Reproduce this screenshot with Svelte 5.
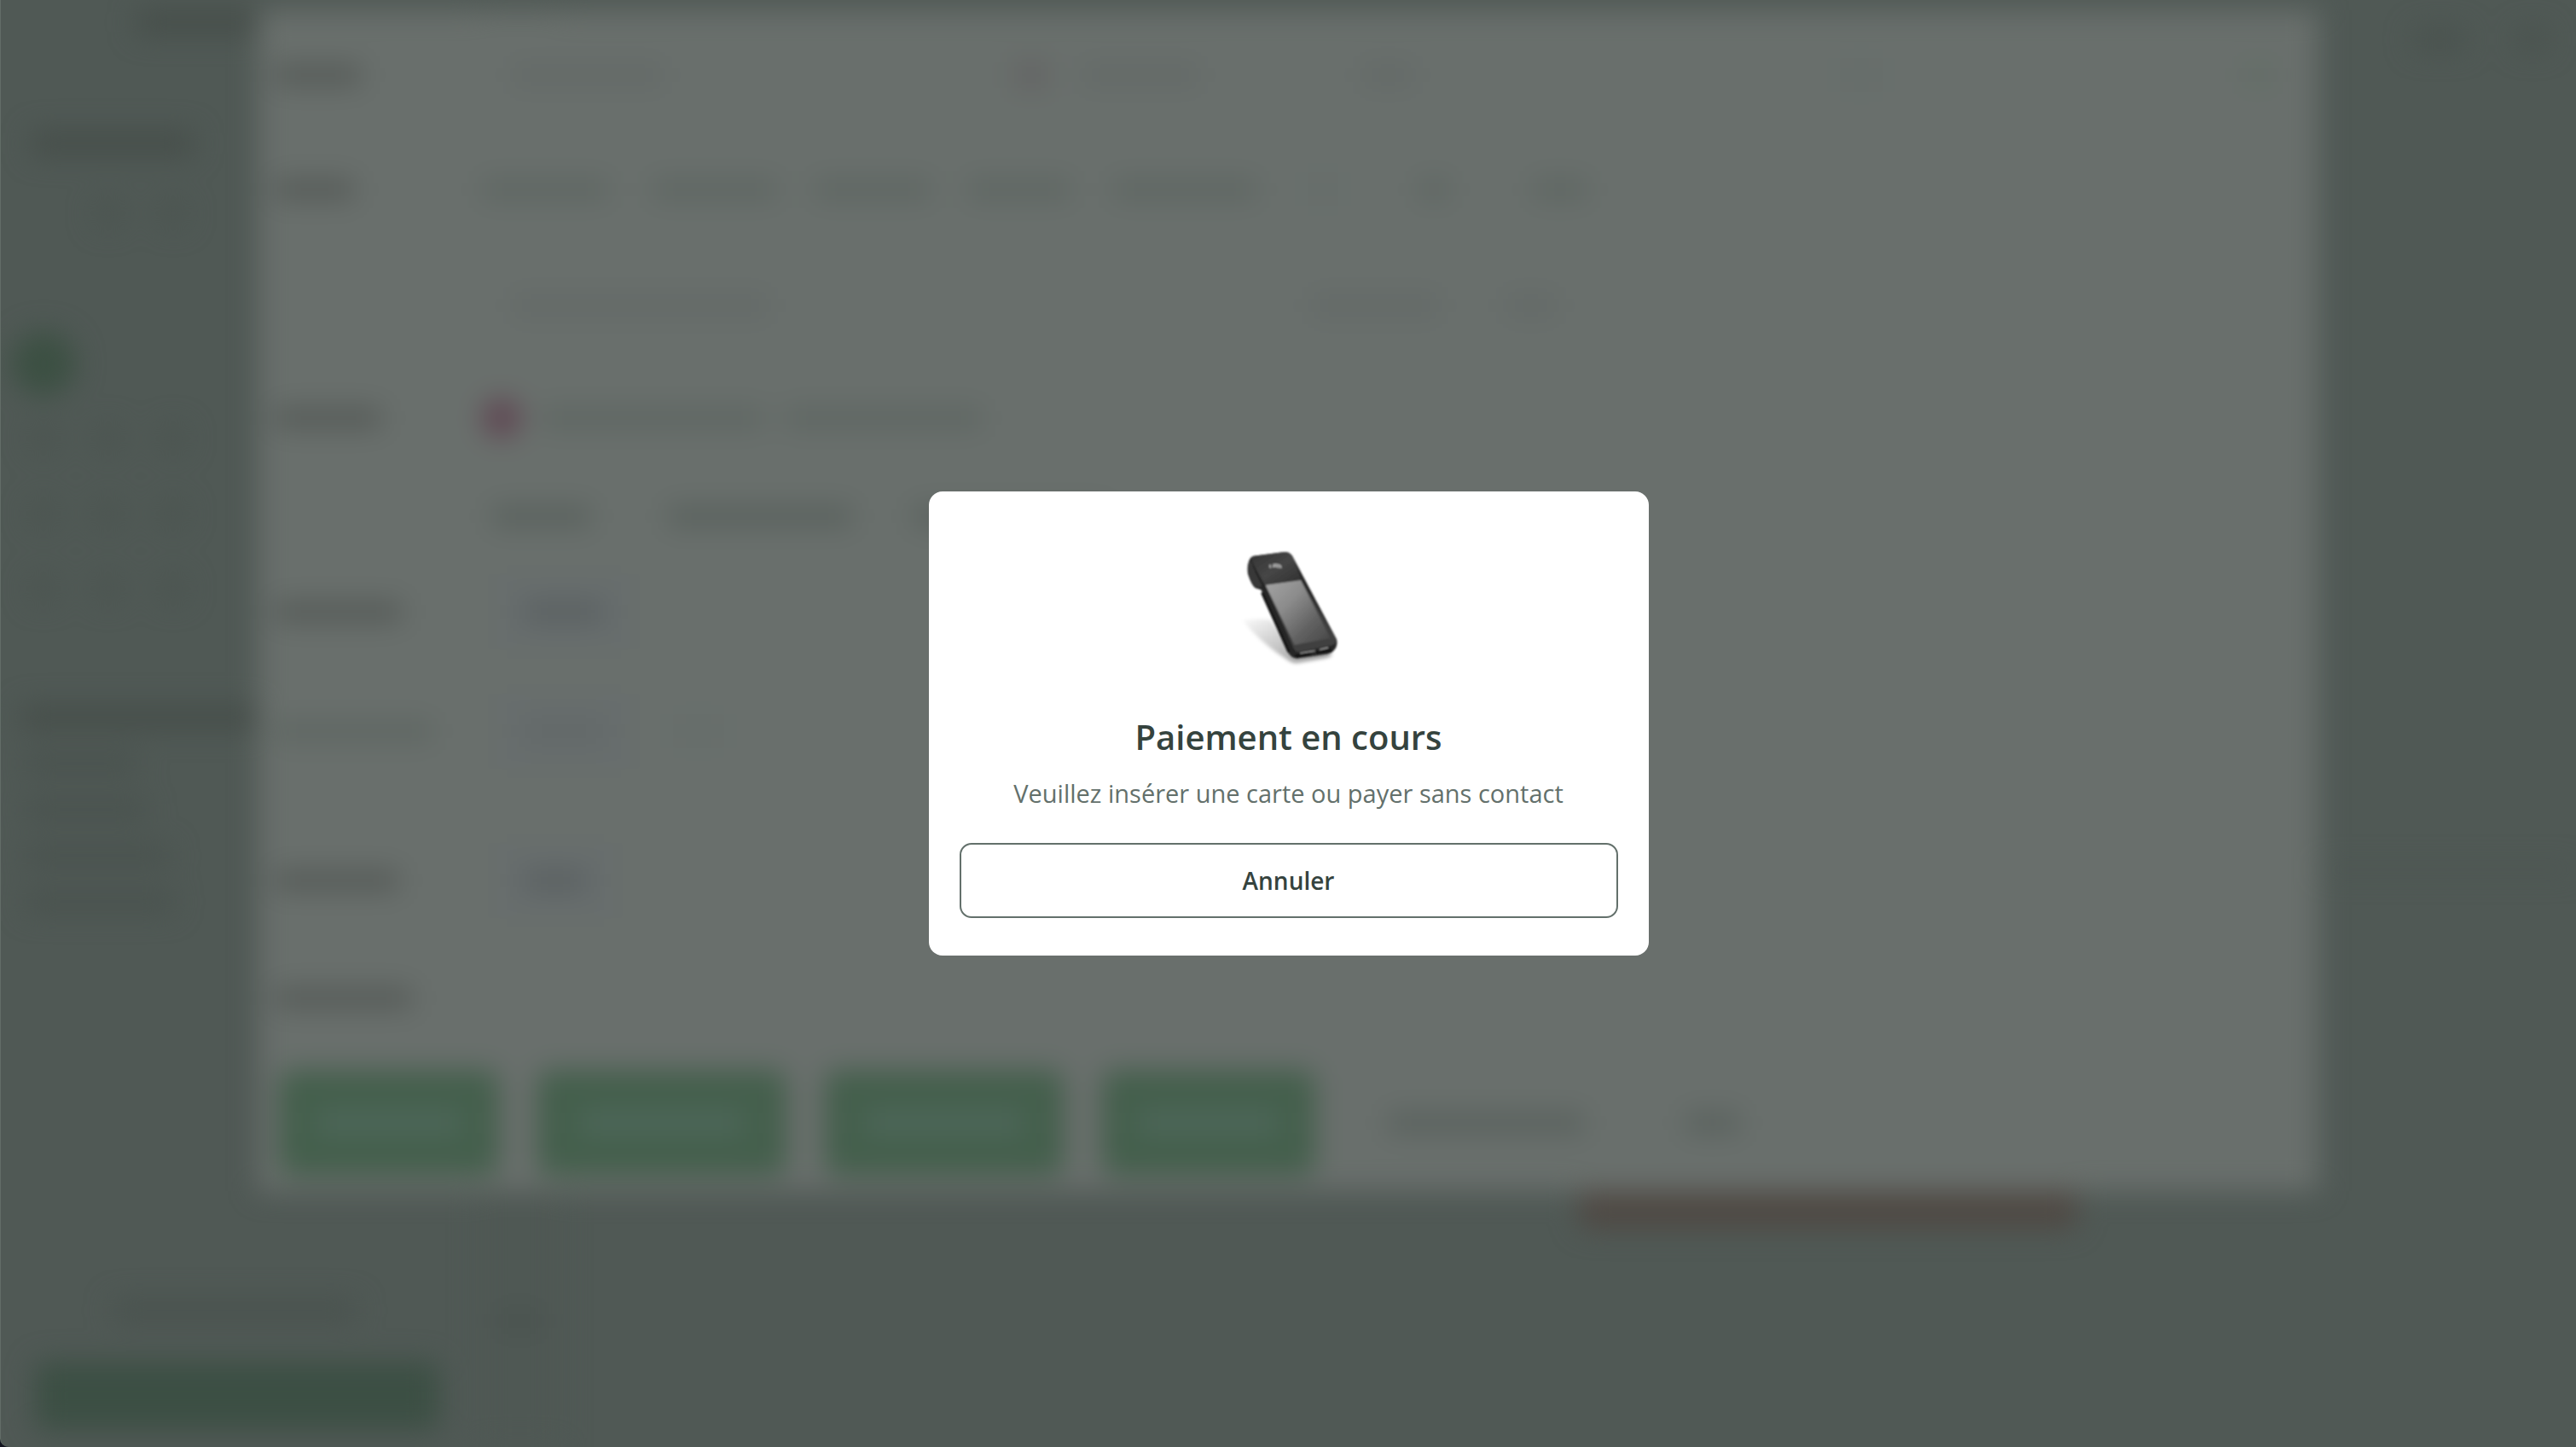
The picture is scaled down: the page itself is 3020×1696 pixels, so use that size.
<script lang="ts">
	type Bar = { gap: number; width: number; tone?: string };
	type Row = { height: number; label?: number; soft?: boolean; bars: Bar[] };

	let open = true;

	// gap and width of every block on a line, in pixels
	const rows: Row[] = [
		{
			height: 152,
			label: 100,
			bars: [
				{ gap: 36, width: 176, tone: "faint" },
				{ gap: 412, width: 40, tone: "flag" },
				{ gap: 40, width: 136, tone: "faint" },
				{ gap: 192, width: 60, tone: "faint" },
				{ gap: 500, width: 50, tone: "ghost" },
				{ gap: 424, width: 32, tone: "moss" },
			],
		},
		{
			height: 116,
			label: 92,
			bars: [
				{ gap: 0, width: 148, tone: "text" },
				{ gap: 52, width: 146, tone: "text" },
				{ gap: 44, width: 136, tone: "text" },
				{ gap: 44, width: 120, tone: "text" },
				{ gap: 50, width: 168, tone: "text" },
				{ gap: 60, width: 36, tone: "ghost" },
				{ gap: 94, width: 36, tone: "text" },
				{ gap: 98, width: 64, tone: "text" },
			],
		},
		{
			height: 156,
			bars: [
				{ gap: 36, width: 300, tone: "faint" },
				{ gap: 636, width: 150, tone: "faint" },
				{ gap: 78, width: 60, tone: "faint" },
			],
		},
		{
			height: 108,
			label: 124,
			bars: [
				{ gap: 0, width: 46, tone: "pink" },
				{ gap: 24, width: 260, tone: "text" },
				{ gap: 26, width: 230, tone: "text" },
			],
		},
		{
			height: 122,
			bars: [
				{ gap: 12, width: 116, tone: "strong" },
				{ gap: 90, width: 216, tone: "strong" },
				{ gap: 72, width: 230, tone: "strong" },
			],
		},
		{ height: 102, label: 148, bars: [{ gap: 18, width: 156, tone: "chip" }] },
		{
			height: 178,
			label: 184,
			soft: true,
			bars: [
				{ gap: 18, width: 156, tone: "chip light" },
				{ gap: 50, width: 60, tone: "ghost" },
			],
		},
		{ height: 172, label: 144, bars: [{ gap: 18, width: 136, tone: "chip" }] },
		{ height: 104, label: 160, bars: [] },
	];

	const actions = [258, 292, 280, 250];
	const days = [
		[0, 1, 1],
		[0, 0, 0],
		[2, 0, 0],
		[1, 1, 1],
		[1, 1, 1],
		[1, 1, 1],
	];
	const agenda = [130, 140, 168, 172];

	function cancel() {
		open = false;
	}
</script>

{#snippet bar(item: Bar)}
	<span
		class="bar {item.tone ?? ''}"
		style="width: {item.width}px; margin-left: {item.gap}px"
	></span>
{/snippet}

<div class="window">
	<div class="behind" aria-hidden="true" inert>
		<div class="shell">
			<aside>
				<div class="brand">{@render bar({ gap: 160, width: 170, tone: "dark" })}</div>
				<div class="month">{@render bar({ gap: 36, width: 190, tone: "dark" })}</div>
				<div class="calendar">
					{#each days as week}
						{#each week as day}
							<i class:dot={day === 1} class:today={day === 2}></i>
						{/each}
					{/each}
				</div>
				<div class="agenda">
					<div>{@render bar({ gap: 24, width: 300, tone: "dark" })}</div>
					{#each agenda as width}
						<div>{@render bar({ gap: 30, width, tone: "dim" })}</div>
					{/each}
				</div>
				<div class="hint">{@render bar({ gap: 0, width: 284, tone: "dim" })}</div>
				<div class="create"></div>
			</aside>
			<div class="hours">{@render bar({ gap: 0, width: 48, tone: "dim" })}</div>
			<main>
				<div class="tools">
					{@render bar({ gap: 0, width: 60, tone: "dim" })}
					{@render bar({ gap: 62, width: 34, tone: "dim" })}
				</div>
				<div class="morning"></div>
				<div class="event"></div>
			</main>
		</div>

		<section class="sheet">
			{#each rows as row}
				<div class="row" style="height: {row.height}px">
					<div class="name">
						{#if row.label}
							{@render bar({ gap: 0, width: row.label, tone: row.soft ? "text" : "label" })}
						{/if}
					</div>
					{#each row.bars as item}
						{@render bar(item)}
					{/each}
				</div>
			{/each}
			<div class="actions">
				{#each actions as width}
					<div class="action" style="width: {width}px"><span></span></div>
				{/each}
				{@render bar({ gap: 40, width: 230, tone: "strong" })}
				{@render bar({ gap: 74, width: 64, tone: "strong" })}
			</div>
		</section>
	</div>

	{#if open}
		<div class="overlay">
			<div class="modal" role="dialog" aria-modal="true" aria-labelledby="payment-title">
				<svg class="terminal" viewBox="0 0 540 540" aria-hidden="true">
					<defs>
						<linearGradient id="screen" x1="0" y1="0" x2="1" y2="1">
							<stop offset="0" stop-color="#a4a4a4" />
							<stop offset="0.35" stop-color="#8c8c8c" />
							<stop offset="0.7" stop-color="#606060" />
							<stop offset="1" stop-color="#454545" />
						</linearGradient>
						<linearGradient id="head" x1="0" y1="0" x2="1" y2="1">
							<stop offset="0" stop-color="#343434" />
							<stop offset="0.5" stop-color="#464646" />
							<stop offset="1" stop-color="#2e2e2e" />
						</linearGradient>
						<linearGradient id="shade" x1="0" y1="0" x2="1" y2="1">
							<stop offset="0" stop-color="#000" stop-opacity="0.02" />
							<stop offset="1" stop-color="#000" stop-opacity="0.42" />
						</linearGradient>
						<filter id="soft" x="-20%" y="-20%" width="140%" height="140%">
							<feGaussianBlur stdDeviation="6" />
						</filter>
						<filter id="edge">
							<feGaussianBlur stdDeviation="3" />
						</filter>
					</defs>
					<path
						d="M108 322Q150 312 206 320L300 440L420 436Q425 448 400 454L300 472Q280 472 262 458Q175 405 108 322Z"
						fill="url(#shade)"
						filter="url(#soft)"
					/>
					<g filter="url(#edge)">
						<path
							d="M146 95L254 81Q274 80 284 98L438 388Q444 412 426 430Q420 438 406 440L302 455Q282 458 268 436L172 214L152 208Q138 196 126 158Q122 130 130 112Q134 98 146 95Z"
							fill="#272727"
						/>
						<path
							d="M146 95L254 81Q274 80 284 98L313 178L187 198Q158 150 140 112Q138 98 146 95Z"
							fill="url(#head)"
						/>
						<path d="M130 118Q124 145 134 170Q142 198 160 206L176 200Q150 156 138 114Z" fill="#383838" />
						<path d="M187 198L313 180L436 388Q438 402 424 408L308 432Q292 434 286 418Z" fill="#414141" />
						<path d="M188 197L312 180L416 384L290 408Z" fill="url(#screen)" />
						<path d="M176 224L270 432" stroke="#181818" stroke-width="10" fill="none" />
						<path d="M310 437L362 428M378 424L408 417" stroke="#a0a0a0" stroke-width="4" fill="none" />
						<path d="M292 447L346 439M366 434L420 426" stroke="#0d0d0d" stroke-width="9" fill="none" />
						<path
							d="M206 126Q200 131 207 137M214 126Q226 122 234 128M212 133Q224 128 236 136M234 126Q244 130 241 138"
							stroke="#b4b4b4"
							stroke-width="5"
							fill="none"
						/>
					</g>
				</svg>
				<h1 id="payment-title">Paiement en cours</h1>
				<p>Veuillez insérer une carte ou payer sans contact</p>
				<button type="button" on:click={cancel}>Annuler</button>
			</div>
		</div>
	{/if}
</div>

<style>
	:global(body) {
		background: #12141f;
		font-family: "Open Sans", "Noto Sans", sans-serif;
	}
	.window {
		position: relative;
		box-sizing: border-box;
		min-height: 100vh;
		overflow: hidden;
		background: #505955;
		border-left: 1px solid #626d67;
		border-bottom-left-radius: 10px;
	}
	.behind {
		position: absolute;
		inset: 0;
		filter: blur(16px);
	}
	.shell {
		display: grid;
		grid-template-columns: 560px 96px 1fr;
		height: 100%;
	}
	aside {
		display: flex;
		flex-direction: column;
	}
	.bar {
		flex: none;
		display: block;
		height: 24px;
		border-radius: 4px;
	}
	.dark {
		background: #464e4a;
		height: 28px;
	}
	.dim {
		background: #49524e;
	}
	.brand {
		padding: 12px 0;
	}
	.month {
		padding: 102px 0 24px;
	}
	.calendar {
		display: grid;
		grid-template-columns: repeat(3, 76px);
		grid-auto-rows: 88px;
		place-items: center;
		padding-left: 12px;
	}
	.dot {
		width: 32px;
		height: 32px;
		border-radius: 50%;
		background: #4b5450;
	}
	.today {
		width: 76px;
		height: 76px;
		border-radius: 50%;
		background: #3c5043;
	}
	.agenda {
		display: grid;
		grid-auto-rows: 54px;
		align-items: center;
		margin-top: 80px;
	}
	.hint {
		display: flex;
		justify-content: center;
		margin-top: auto;
		padding: 0 12px 48px 0;
	}
	.create {
		height: 80px;
		margin: 0 46px 20px 40px;
		border-radius: 12px;
		background: #3c4f44;
	}
	.hours {
		display: flex;
		align-items: flex-end;
		justify-content: center;
		padding-bottom: 136px;
		background: #4f5854;
	}
	main {
		display: flex;
		flex-direction: column;
	}
	.tools {
		display: flex;
		justify-content: flex-end;
		padding: 34px;
	}
	.morning {
		height: 924px;
		border-bottom: 6px solid #4b5450;
	}
	.event {
		width: 584px;
		height: 418px;
		margin-left: 1194px;
		border-radius: 12px;
		background: #4f4944;
	}
	.sheet {
		position: absolute;
		top: 12px;
		left: 10%;
		right: 10%;
		background: #696f6c;
	}
	.row {
		display: flex;
		align-items: center;
	}
	.name {
		flex: none;
		width: 242px;
		padding-left: 20px;
	}
	.label {
		background: #555a57;
	}
	.strong {
		background: #59615d;
	}
	.text {
		background: #5e6662;
	}
	.faint {
		background: #636967;
	}
	.ghost {
		height: 40px;
		background: #666e6b;
	}
	.moss {
		background: #616d65;
	}
	.flag {
		height: 32px;
		background: #646464;
	}
	.pink {
		height: 46px;
		border-radius: 50%;
		background: #604753;
	}
	.chip {
		box-sizing: border-box;
		height: 88px;
		border: 32px solid #676d6d;
		background: #5a6061;
	}
	.chip.light {
		background: #626868;
	}
	.actions {
		display: flex;
		align-items: center;
		gap: 45px;
		padding: 32px 24px 18px;
	}
	.action {
		display: grid;
		place-items: center;
		height: 124px;
		border-radius: 16px;
		background: #445f4c;
	}
	.action span {
		width: 66%;
		height: 28px;
		background: #4e675a;
	}
	.overlay {
		position: absolute;
		inset: 0;
		display: grid;
		place-items: center;
	}
	.modal {
		box-sizing: border-box;
		display: flex;
		flex-direction: column;
		align-items: center;
		width: 844px;
		max-width: 100%;
		padding: 44px 36px;
		border-radius: 16px;
		background: #fff;
		text-align: center;
	}
	.terminal {
		width: 180px;
		height: 180px;
	}
	h1 {
		margin: 36px 0 0;
		font-size: 40px;
		font-weight: 600;
		line-height: 56px;
		color: #35433e;
	}
	p {
		margin: 16px 0 36px;
		font-size: 29px;
		line-height: 44px;
		color: #63706b;
	}
	button {
		width: 100%;
		height: 88px;
		border: 2px solid #63706b;
		border-radius: 14px;
		background: #fff;
		font: inherit;
		font-size: 28px;
		font-weight: 600;
		color: #35433e;
		cursor: pointer;
	}
</style>
